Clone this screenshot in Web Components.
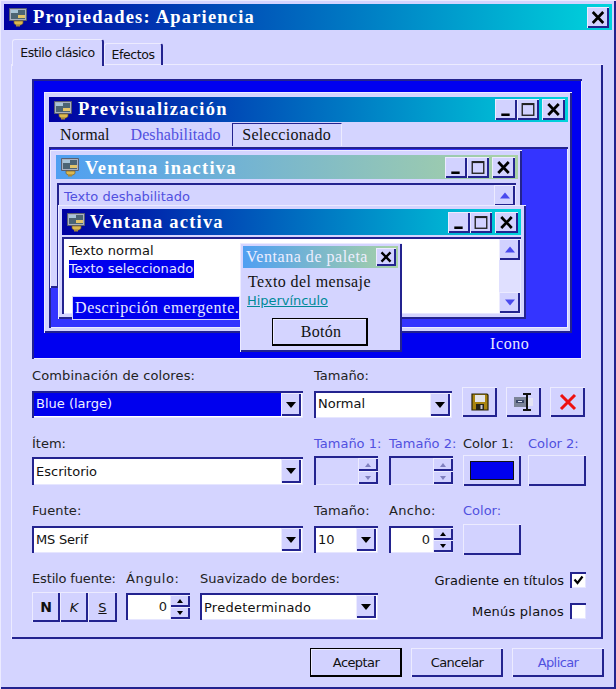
<!DOCTYPE html>
<html lang="es"><head><meta charset="utf-8"><title>Propiedades: Apariencia</title>
<style>
html,body{margin:0;padding:0;background:#d4d4ff}
body{font:13px "DejaVu Sans",sans-serif;color:#111}
</style></head><body>
<app-dialog>
  <caption-bar slot="title" text="Propiedades: Apariencia"></caption-bar>
  <tab-strip slot="tabs"></tab-strip>
  <preview-pane></preview-pane>
  <form-rows></form-rows>
  <dialog-actions slot="actions"></dialog-actions>
</app-dialog>
<script>
const RAISED='box-shadow:inset 1px 1px 0 #ecebff,inset -2px -2px 0 #23238f;background:#d2d2ff;';
const SUNK='box-shadow:inset 2px 2px 0 #23238f,inset -1px -1px 0 #e6e6ff;';
function def(name,css,html,init){
  customElements.define(name,class extends HTMLElement{
    constructor(){super();this.attachShadow({mode:'open'});}
    connectedCallback(){
      const a=n=>this.getAttribute(n)||'';
      this.shadowRoot.innerHTML='<style>'+css+'</style>'+(typeof html==='function'?html(a):html);
      if(init)init(this);
    }
  });
}
const ICON=`<svg viewBox="0 0 20 20" width="100%" height="100%">
<path d="M1.5 1.5h17v12h-17z" fill="#aab0c0" stroke="#5a6070" stroke-width="1"/>
<rect x="3" y="3" width="14" height="9" fill="#4c6474"/>
<path d="M3 3h7v3H3z" fill="#a8c4d8"/><path d="M10 8h7v3h-7z" fill="#e4c468"/>
<path d="M6 14h9v2.5l-2 1.5H8l-2-1.5z" fill="#dcb850" stroke="#7a6028" stroke-width=".7"/>
<path d="M8 18h4v1.5H8z" fill="#a88a38"/></svg>`;

def('cap-btn',`:host{display:block;box-sizing:border-box;${RAISED}position:relative}
svg{display:block;width:100%;height:100%}`,
a=>{const k=a('kind');const p=k==='min'?'<path d="M6 15h8" stroke="#000" stroke-width="2.4"/>':
 k==='max'?'<rect x="5" y="4.5" width="11" height="11" fill="none" stroke="#222" stroke-width="1.3"/><path d="M5 5h11" stroke="#222" stroke-width="1.6"/>':
 '<path d="M5.5 4.8L15.5 15.2M15.5 4.8L5.5 15.2" stroke="#000" stroke-width="2.6"/>';
 return `<svg viewBox="0 0 21 20">${p}</svg>`;});

def('caption-bar',`:host{display:flex;align-items:center;height:26px;background:linear-gradient(90deg,#0000a2,#00d4dc);color:#fff;padding:0 3px 0 4px}
i{display:block;width:20px;height:20px;flex:none;margin-right:5px}
span{flex:1;font:bold 18.5px "Liberation Serif",serif;letter-spacing:1.2px;white-space:nowrap}
cap-btn{width:22px;height:21px}`,
a=>`<i>${ICON}</i><span>${a('text')}</span><cap-btn kind="close"></cap-btn>`);

def('tab-strip',`:host{display:flex;align-items:flex-end;height:27px;padding:0 0 0 1px;font:12.5px "DejaVu Sans",sans-serif;letter-spacing:-.42px}
div{box-sizing:border-box;text-align:center;border-top:1px solid #ecebff;border-left:1px solid #ecebff;border-right:2px solid #23238f;border-radius:3px 3px 0 0}
.a{width:92px;height:27px;padding-top:5px;margin-bottom:-1px;position:relative;background:#d4d4ff}
.b{width:59px;height:22px;padding-top:3px}`,
`<div class="a">Estilo clásico</div><div class="b">Efectos</div>`);

def('mini-caption',`:host{display:flex;align-items:center;color:#fff;background:linear-gradient(90deg,var(--c1),var(--c2));position:relative}
i{display:block;flex:none;width:20px;height:20px;margin:0 var(--gap,5px) 0 4px}
span{flex:1;white-space:nowrap;padding-top:var(--tp,0)}
nav{display:flex;align-items:center;margin-right:3px}
cap-btn{width:22px;height:21px}
.sp{margin-left:3px;width:23px}`,
a=>`<i>${ICON}</i><span>${a('text')}</span><nav><cap-btn kind="min"></cap-btn><cap-btn kind="max"></cap-btn><cap-btn class="sp" kind="close"></cap-btn></nav>`);

def('mini-scroll',`:host{display:flex;flex-direction:column;justify-content:space-between;width:21px;background:#e0e0ff;box-sizing:border-box}
b{display:flex;align-items:center;justify-content:center;height:21px;${RAISED}}
svg{width:10px;height:7px;fill:#4a4aee}`,
a=>{const up='<b><svg viewBox="0 0 10 6"><path d="M5 0l5 6H0z"/></svg></b>';
 const dn='<b><svg viewBox="0 0 10 6"><path d="M0 0h10L5 6z"/></svg></b>';
 return a('only')==='up'?up:up+dn;});

def('inactive-win',`:host{display:flex;flex-direction:column;box-sizing:border-box;background:#d4d4ff;box-shadow:inset 1px 1px 0 #ecebff,inset -2px -2px 0 #23238f}
mini-caption{--c1:#4f9ff2;--c2:#a9d2a4;--tp:2px;height:24px;margin:5px 4px 0 6px;font:bold 18.5px "Liberation Serif",serif;letter-spacing:1.2px}
.b{margin:4px 6px 0 7px;flex:1;display:flex;${SUNK}padding:2px 0 0 2px}
.t{flex:1;color:#5050e0;font:13px "DejaVu Sans",sans-serif;padding:4px 0 0 5px;letter-spacing:0}
mini-scroll{margin-right:1px}`,
`<mini-caption text="Ventana inactiva"></mini-caption><div class="b"><div class="t">Texto deshabilitado</div><mini-scroll only="up"></mini-scroll></div>`);

def('active-win',`:host{display:flex;flex-direction:column;box-sizing:border-box;background:#d4d4ff;box-shadow:inset 1px 1px 0 #ecebff,inset -2px -2px 0 #23238f;padding:4px 5px 5px 4px}
mini-caption{--c1:#0000a2;--c2:#00d4dc;--gap:4px;height:26px;font:bold 18.5px "Liberation Serif",serif;letter-spacing:1.2px}
.b{margin-top:2px;flex:1;display:flex;background:#fff;${SUNK}padding:2px 1px 1px 2px}
.t{flex:1;font:13px "DejaVu Sans",sans-serif;padding:3px 0 0 5px;color:#111;line-height:18px;letter-spacing:.07px}
.s{display:inline-block;background:#0000ee;color:#e8e8ff;padding:0 1px 0 0}`,
`<mini-caption text="Ventana activa"></mini-caption><div class="b"><div class="t">Texto normal<br><span class="s">Texto seleccionado</span></div><mini-scroll></mini-scroll></div>`);

def('palette-win',`:host{display:block;box-sizing:border-box;background:#d4d4ff;padding:3px 4px 0 3px;box-shadow:inset 1px 1px 0 #ecebff,inset -2px -2px 0 #23238f}
.c{display:flex;align-items:center;justify-content:space-between;height:22px;background:linear-gradient(90deg,#4f9ff2,#a9d2a4);color:#eef;font:16px "Liberation Serif",serif;letter-spacing:.54px;padding:0 2px 0 3px}
cap-btn{width:20px;height:18px}
.m{font:16px "Liberation Serif",serif;letter-spacing:.4px;margin:5px 0 0 5px;line-height:18px;white-space:nowrap}
a{display:block;color:#008a98;text-decoration:underline;font:13px "DejaVu Sans",sans-serif;margin:1px 0 0 4px;line-height:17px;letter-spacing:-.05px}
.btn{box-sizing:border-box;width:96px;height:28px;margin:9px 0 0 29px;border:2px solid #000;border-width:1px 2px 2px 1px;box-shadow:inset 1px 1px 0 #ecebff;display:flex;align-items:center;justify-content:center;font:16px "Liberation Serif",serif;letter-spacing:.3px;padding-left:3px}`,
`<div class="c"><span>Ventana de paleta</span><cap-btn kind="close"></cap-btn></div><div class="m">Texto del mensaje</div><a>Hipervínculo</a><div class="btn">Botón</div>`);

def('preview-pane',`:host{display:block;position:relative;box-sizing:border-box;height:280px;margin:0 21px;background:#0000f0;box-shadow:inset 2px 2px 0 #23238f,inset -1px -1px 0 #ecebff;overflow:hidden}
.w{position:absolute;left:12px;top:13px;width:528px;height:241px;box-sizing:border-box;background:#d4d4ff;box-shadow:inset 1px 1px 0 #ecebff,inset -2px -2px 0 #23238f;padding:5px 4px 5px 5px;display:flex;flex-direction:column}
mini-caption{--c1:#0000a2;--c2:#00d4dc;--gap:5px;height:25px;font:bold 18.5px "Liberation Serif",serif;letter-spacing:1.3px;flex:none}
.m{display:flex;height:25px;font:16px "Liberation Serif",serif;letter-spacing:.1px;align-items:center;flex:none;color:#111}
.m span{margin-left:11px}.m .d{color:#5050e0;margin-left:21px}
.m .s{box-sizing:border-box;margin-left:11px;width:110px;height:23px;text-align:center;line-height:22px;letter-spacing:.3px;border-top:1px solid #23238f;border-left:1px solid #23238f;border-right:1px solid #ecebff;}
.d2{flex:1;background:#3434ff;box-shadow:inset 2px 2px 0 #23238f,inset -1px -1px 0 #ecebff;min-height:0}
inactive-win{position:absolute;left:18px;top:71px;width:472px;height:138px}
active-win{position:absolute;left:26px;top:126px;width:468px;height:114px}
palette-win{position:absolute;left:208px;top:164px;width:162px;height:109px}
.tip{position:absolute;left:40px;top:217px;height:24px;width:168px;box-sizing:border-box;background:#0000ee;color:#e8e8ff;font:16px "Liberation Serif",serif;letter-spacing:.58px;line-height:22px;padding-left:2px;white-space:nowrap;border:1px solid #d4d4ff}
.ic{position:absolute;left:458px;top:256px;color:#e8e8ff;font:16px "Liberation Serif",serif;letter-spacing:.6px}`,
`<div class="w"><mini-caption text="Previsualización"></mini-caption><div class="m"><span>Normal</span><span class="d">Deshabilitado</span><span class="s">Seleccionado</span></div><div class="d2"></div></div>
<inactive-win></inactive-win><active-win></active-win><div class="tip">Descripción emergente.</div><palette-win></palette-win><div class="ic">Icono</div>`);

def('field-label',`:host{display:block;height:16px;line-height:16px;white-space:nowrap;color:#222}
:host([dis]){color:#5050e0}`,`<slot></slot>`);

def('arrow-btn',`:host{display:flex;flex:none;align-items:center;justify-content:center;width:20px;${RAISED}}
svg{width:10px;height:6px;fill:#000}`,`<svg viewBox="0 0 10 6"><path d="M0 0h10L5 6z"/></svg>`);

def('combo-box',`:host{display:flex;box-sizing:border-box;height:27px;padding:2px;background:#fff;${SUNK}}
.t{flex:1;padding-left:2px;line-height:var(--lh,22px);white-space:nowrap;overflow:hidden;color:#111;background:#fff}
:host([sel]) .t{background:#0000ee;color:#f0f0ff}`,
a=>`<div class="t">${a('value')}</div><arrow-btn></arrow-btn>`);

def('spin-box',`:host{display:flex;box-sizing:border-box;height:27px;padding:2px 0 1px 2px;background:#fff;${SUNK}}
:host([dis]){background:#d4d4ff;height:29px}
.t{flex:1;text-align:right;padding-right:3px;line-height:23px;color:#222}
.s{display:flex;flex-direction:column;width:20px;flex:none}
b{flex:1;display:flex;align-items:center;justify-content:center;${RAISED}}
:host([dis]) svg{fill:#8080c0}
svg{width:6px;height:4px;fill:#000}`,
a=>`<div class="t">${a('value')}</div><div class="s"><b><svg viewBox="0 0 6 4"><path d="M3 0l3 4H0z"/></svg></b><b><svg viewBox="0 0 6 4"><path d="M0 0h6L3 4z"/></svg></b></div>`);

def('push-btn',`:host{display:flex;box-sizing:border-box;align-items:center;justify-content:center;${RAISED}flex:none}
:host([def]){box-shadow:inset 1px 1px 0 #000,inset -2px -2px 0 #000,inset 2px 2px 0 #ecebff}
:host([dis]){color:#5050e0}`,`<slot></slot>`);

def('check-box',`:host{display:flex;align-items:center;justify-content:center;box-sizing:border-box;width:16px;height:16px;background:#fff;box-shadow:inset 2px 2px 0 #23238f,inset -1px -1px 0 #e6e6ff}
svg{width:11px;height:10px}`,
a=>a('on')==='1'?`<svg viewBox="0 0 11 10"><path d="M1.5 4.5L4.5 8 9.5 1.5" fill="none" stroke="#000" stroke-width="2.2"/></svg>`:'');

def('form-rows',`:host{display:block;margin:9px 0 0 21px;width:554px}
.r{display:flex}
.c{flex:none}
.c1{width:282px}.c2{width:75px}.c3{width:74px}
.tb{display:flex;gap:9px;align-self:flex-end;margin-bottom:-4px}
push-btn{height:30px}
.tb push-btn{width:35px}
.tb svg{display:block}
.seg{display:flex;margin-top:5px}
.seg push-btn{width:28px;height:30px;font-size:13px}
.opt{flex:1;display:flex;flex-direction:column;align-items:flex-end;gap:15px;padding-top:1px}
.opt div{display:flex;align-items:center;gap:6px;white-space:nowrap}
`,
`<div class="r" style="height:45px">
  <div class="c c1"><field-label style="letter-spacing:.13px">Combinación de colores:</field-label><combo-box sel value="Blue (large)" style="width:271px;margin-top:7px"></combo-box></div>
  <div class="c" style="width:148px"><field-label>Tamaño:</field-label><combo-box value="Normal" style="width:138px;margin-top:7px"></combo-box></div>
  <div class="tb">
   <push-btn><svg width="18" height="18" viewBox="0 0 18 18"><path d="M1 1h15l1 1v15H1z" fill="#a98410" stroke="#2a2408" stroke-width="1.2"/><rect x="4" y="2" width="10" height="7" fill="#e4e4ea"/><rect x="5" y="11" width="8" height="6" fill="#26241a"/><rect x="9.5" y="12" width="2" height="4" fill="#c8c8d8"/></svg></push-btn>
   <push-btn><svg width="22" height="20" viewBox="0 0 22 20"><rect x="1" y="5" width="13" height="10" fill="#7c8498"/><rect x="3" y="8" width="8" height="3" fill="#3c4868"/><rect x="5" y="9" width="4" height="1" fill="#e0e4f4"/><rect x="13" y="6" width="7" height="8" fill="#e4e4f4"/><path d="M10 2h8M14 2v16M10 18h8" stroke="#111" stroke-width="2" fill="none"/></svg></push-btn>
   <push-btn><svg width="18" height="18" viewBox="0 0 18 18"><path d="M2 2L16 16M16 2L2 16" stroke="#ee1010" stroke-width="3"/></svg></push-btn>
  </div>
</div>
<div class="r" style="padding-top:24px;box-sizing:border-box;height:92px;margin-top:-1px">
  <div class="c c1"><field-label>Ítem:</field-label><combo-box value="Escritorio" style="--lh:25px;width:271px;height:28px;margin-top:5px"></combo-box></div>
  <div class="c c2"><field-label dis>Tamaño 1:</field-label><spin-box dis style="width:64px;margin-top:4px"></spin-box></div>
  <div class="c c3"><field-label dis>Tamaño 2:</field-label><spin-box dis style="width:64px;margin-top:4px"></spin-box></div>
  <div class="c" style="width:65px"><field-label>Color 1:</field-label><push-btn style="width:58px;margin-top:3px;height:31px"><span style="display:block;width:42px;height:17px;background:#0000ee;border:1px solid #111"></span></push-btn></div>
  <div class="c"><field-label dis>Color 2:</field-label><push-btn style="width:58px;margin-top:3px;height:31px"></push-btn></div>
</div>
<div class="r" style="height:68px;margin-top:-1px">
  <div class="c c1"><field-label style="letter-spacing:.1px">Fuente:</field-label><combo-box value="MS Serif" style="--lh:24px;width:271px;margin-top:7px;letter-spacing:-.2px"></combo-box></div>
  <div class="c c2"><field-label style="letter-spacing:.1px">Tamaño:</field-label><combo-box value="10" style="--lh:24px;width:64px;margin-top:7px"></combo-box></div>
  <div class="c c3"><field-label style="letter-spacing:.3px">Ancho:</field-label><spin-box value="0" style="width:64px;margin-top:7px"></spin-box></div>
  <div class="c"><field-label dis>Color:</field-label><push-btn style="width:58px;margin-top:5px;height:31px"></push-btn></div>
</div>
<div class="r">
  <div class="c" style="width:94px"><field-label style="letter-spacing:-.15px">Estilo fuente:</field-label><div class="seg"><push-btn style="font-weight:bold;font-size:14px">N</push-btn><push-btn style="font-style:italic">K</push-btn><push-btn style="text-decoration:underline;width:29px">S</push-btn></div></div>
  <div class="c" style="width:74px"><field-label style="letter-spacing:.55px">Ángulo:</field-label><spin-box value="0" style="width:64px;margin-top:6px"></spin-box></div>
  <div class="c" style="width:230px"><field-label>Suavizado de bordes:</field-label><combo-box value="Predeterminado" style="--lh:25px;width:178px;margin-top:6px;letter-spacing:.25px"></combo-box></div>
  <div class="opt"><div>Gradiente en títulos<check-box on="1"></check-box></div><div style="letter-spacing:.22px">Menús planos<check-box></check-box></div></div>
</div>`);

def('dialog-actions',`:host{display:flex;justify-content:flex-end;gap:9px;padding:9px 8px 0 0;letter-spacing:-.6px}
push-btn{width:92px;height:29px}`,
`<push-btn def>Aceptar</push-btn><push-btn>Cancelar</push-btn><push-btn dis>Aplicar</push-btn>`);

def('app-dialog',`:host{display:block;box-sizing:border-box;width:616px;height:689px;padding:4px;background:#d4d4ff;box-shadow:inset 1px 1px 0 #ecebff,inset -2px -2px 0 #23238f}
.body{height:574px;box-sizing:border-box;padding-top:14px;margin:0 9px 0 7px;box-shadow:inset 1px 0 0 #ecebff,inset -2px -2px 0 #23238f,0 -1px 0 #ecebff}
.tabs{padding:8px 0 0 7px;height:27px}`,
`<slot name="title"></slot><div class="tabs"><slot name="tabs"></slot></div><div class="body"><slot></slot></div><slot name="actions"></slot>`);
</script>
</body></html>
